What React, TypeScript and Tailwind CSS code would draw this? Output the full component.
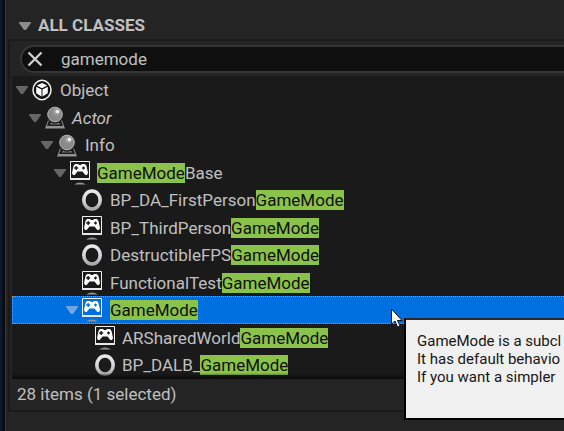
import React from 'react';

type IconKind = 'object' | 'actor' | 'gamepad' | 'ring';

interface ClassRow {
  id: string;
  before?: string;
  match?: string;
  after?: string;
  icon: IconKind;
  indent: string;
  iconGap: string;
  expandable?: boolean;
  italic?: boolean;
  selected?: boolean;
}

const rows: ClassRow[] = [
  { id: 'object', before: 'Object', icon: 'object', indent: 'pl-1', iconGap: 'gap-2', expandable: true },
  { id: 'actor', before: 'Actor', icon: 'actor', indent: 'pl-[17px]', iconGap: 'gap-[7px]', expandable: true, italic: true },
  { id: 'info', before: 'Info', icon: 'actor', indent: 'pl-[29px]', iconGap: 'gap-2', expandable: true },
  { id: 'base', match: 'GameMode', after: 'Base', icon: 'gamepad', indent: 'pl-[42px]', iconGap: 'gap-[7px]', expandable: true },
  { id: 'first', before: 'BP_DA_FirstPerson', match: 'GameMode', icon: 'ring', indent: 'pl-[54px]', iconGap: 'gap-2' },
  { id: 'third', before: 'BP_ThirdPerson', match: 'GameMode', icon: 'gamepad', indent: 'pl-[54px]', iconGap: 'gap-2' },
  { id: 'destructible', before: 'DestructibleFPS', match: 'GameMode', icon: 'ring', indent: 'pl-[54px]', iconGap: 'gap-2' },
  { id: 'functional', before: 'FunctionalTest', match: 'GameMode', icon: 'gamepad', indent: 'pl-[54px]', iconGap: 'gap-2' },
  { id: 'gamemode', match: 'GameMode', icon: 'gamepad', indent: 'pl-[53px]', iconGap: 'gap-2', expandable: true, selected: true },
  { id: 'shared', before: 'ARSharedWorld', match: 'GameMode', icon: 'gamepad', indent: 'pl-[67px]', iconGap: 'gap-[7px]' },
  { id: 'dalb', before: 'BP_DALB_', match: 'GameMode', icon: 'ring', indent: 'pl-[67px]', iconGap: 'gap-[7px]' },
];

function Arrow({ className }: { className: string }) {
  return (
    <svg viewBox="0 0 12 8" className={`h-2 w-3 shrink-0 ${className}`} fill="currentColor" aria-hidden="true">
      <path d="M0 0h12v1L7 8H5L0 1z" />
    </svg>
  );
}

function ClassIcon({ kind }: { kind: IconKind }) {
  if (kind === 'object') {
    return (
      <svg viewBox="0 0 20 22" className="h-[22px] w-5 shrink-0" aria-hidden="true">
        <ellipse cx="10" cy="11" rx="9" ry="9.7" fill="#111" stroke="#f2f2f2" strokeWidth="1.500" />
        <path d="M10 4l5.200 2.600L10 9.300 4.800 6.600zM4.200 7.700l5.300 2.700v7l-5.300-3.200zM15.800 7.700l-5.300 2.700v7l5.300-3.200z" fill="#fff" />
      </svg>
    );
  }
  if (kind === 'actor') {
    return (
      <svg viewBox="0 0 20 23" className="h-[23px] w-5 shrink-0" aria-hidden="true">
        <defs>
          <radialGradient id="sphere" cx="0.62" cy="0.3" r="0.7">
            <stop offset="0" stopColor="#c4c4c4" />
            <stop offset="0.4" stopColor="#8c8c8c" />
            <stop offset="1" stopColor="#858585" />
          </radialGradient>
        </defs>
        <path d="M3 14.500h14l3 8H0z" fill="#929292" />
        <path d="M4 14h12l2 6H2z" fill="#1e1e1e" />
        <path d="M6 16.500q4 2.500 8 0l1 2H5z" fill="#777" />
        <circle cx="10" cy="8.500" r="7.300" fill="url(#sphere)" stroke="#b8b8b8" strokeWidth="1" />
        <circle cx="12.500" cy="5.500" r="1.600" fill="#fff" />
      </svg>
    );
  }
  if (kind === 'gamepad') {
    return (
      <svg viewBox="0 0 20 24" className="h-6 w-5 shrink-0" aria-hidden="true">
        <path d="M0.500 0.500h19v17h-19z" fill="none" stroke="#f0f0f0" strokeWidth="1" />
        <path d="M0 17h20v2H0z" fill="#e8e8e8" />
        <path
          fillRule="evenodd"
          fill="#fff"
          d="M5 3h3l1 1h2l1-1h3l1.500 2L18 12l-1 2h-1.700L12.500 10.500h-5L4.700 14H3l-1-2L3.500 5zM5.500 5v1.300H4.200v1.400h1.300V9h1.400V7.700h1.300V6.300H6.900V5zm8 .2l-1.700 1.800 1.700 1.800 1.700-1.800z"
        />
        <path d="M4 23.500Q10 19.500 16 23.500z" fill="#929292" />
      </svg>
    );
  }
  return (
    <svg viewBox="0 0 20 22" className="h-[22px] w-5 shrink-0" aria-hidden="true">
      <defs>
        <linearGradient id="ring" x1="0" y1="0" x2="0" y2="1">
          <stop offset="0" stopColor="#e8e8e8" />
          <stop offset="0.5" stopColor="#d8d8dc" />
          <stop offset="1" stopColor="#a8a8a8" />
        </linearGradient>
      </defs>
      <ellipse cx="10" cy="11" rx="8.200" ry="9" fill="none" stroke="url(#ring)" strokeWidth="3.600" />
    </svg>
  );
}

function TreeRow({ row }: { row: ClassRow }) {
  return (
    <li
      role="treeitem"
      aria-selected={!!row.selected}
      aria-expanded={row.expandable ? true : undefined}
      className={`flex shrink-0 items-center whitespace-nowrap odd:h-7 even:h-[27px] ${row.indent} ${
        row.selected ? 'border border-r-0 border-dotted border-[#f09000] bg-[#0070e0]' : ''
      }`}
    >
      <span className="mr-1 flex w-3 shrink-0">
        {row.expandable && <Arrow className={row.selected ? 'text-[#72a7df]' : 'text-[#666]'} />}
      </span>
      <span className={`flex items-center ${row.iconGap}`}>
        <ClassIcon kind={row.icon} />
        <span className={`leading-5 ${row.italic ? 'italic' : ''}`}>
          {row.before}
          {row.match && <mark className="inline-block bg-[#8bc34a] leading-5 text-[#101010]">{row.match}</mark>}
          {row.after}
        </span>
      </span>
    </li>
  );
}

export default function App() {
  return (
    <div className="relative min-h-screen overflow-hidden border-l-2 border-[#0b1a38] bg-[#242424] font-[Roboto,sans-serif] text-[17px] text-[#c0c0c0]">
      <div className="min-h-screen border-l-3 border-[#0c0c0e]">
        <div className="min-h-screen border-l border-[#383838] pt-3">
          <section className="ml-0.5">
            <h2 className="h-[27px]">
              <button type="button" className="flex h-[27px] items-center gap-[7px] pl-[11px] font-bold">
                <Arrow className="text-[#8c8c8c]" />
                ALL CLASSES
              </button>
            </h2>
            <div className="border-y-2 border-l-2 border-[#1a1a1a] pl-0.5">
              <div className="pt-1 pb-[3px] pl-2">
                <div className="flex h-7 items-center rounded-l-full border-2 border-r-0 border-[#353535] bg-[#0f0f0f] pl-[5px]">
                  <button type="button" aria-label="Clear search" className="mr-[18px]">
                    <svg viewBox="0 0 16 16" className="size-4" fill="none" stroke="#d0d0d0" strokeWidth="2.300" aria-hidden="true">
                      <path d="M1.500 1.500l13 13M14.500 1.500l-13 13" />
                    </svg>
                  </button>
                  <input
                    type="text"
                    aria-label="Search classes"
                    defaultValue="gamemode"
                    className="min-w-0 flex-1 bg-transparent leading-5 outline-none"
                  />
                </div>
              </div>
              <div className="relative bg-[#1a1a1a]">
                <ul role="tree" aria-label="All classes" className="-mb-px flex flex-col">
                  {rows.map((row) => (
                    <TreeRow key={row.id} row={row} />
                  ))}
                </ul>
                <div className="absolute inset-x-0 bottom-0 h-1.5 bg-linear-to-b from-transparent to-[#0c0c0c]" />
              </div>
              <p className="h-8 pl-[5px] leading-8">28 items (1 selected)</p>
            </div>
          </section>
        </div>
      </div>

      <div
        role="tooltip"
        className="absolute -right-1 top-[318px] left-[402px] h-[102px] border-2 border-t-[#2a2a2a] border-r-black border-b-black border-l-black bg-[#f0f0f0] py-3 pl-[11px] text-[15px] leading-[18px] whitespace-nowrap text-[#161616]"
      >
        <p>GameMode is a subcl</p>
        <p>It has default behavio</p>
        <p>If you want a simpler</p>
      </div>
      <svg viewBox="0 0 14 20" className="absolute top-[308px] left-[388px] h-5 w-3.5" aria-hidden="true">
        <path d="M1.500 1v15l3.500-3 2.500 6 2.500-1-2.500-5.500h4.500z" fill="#fff" stroke="#0b1420" strokeWidth="1" />
      </svg>
    </div>
  );
}
